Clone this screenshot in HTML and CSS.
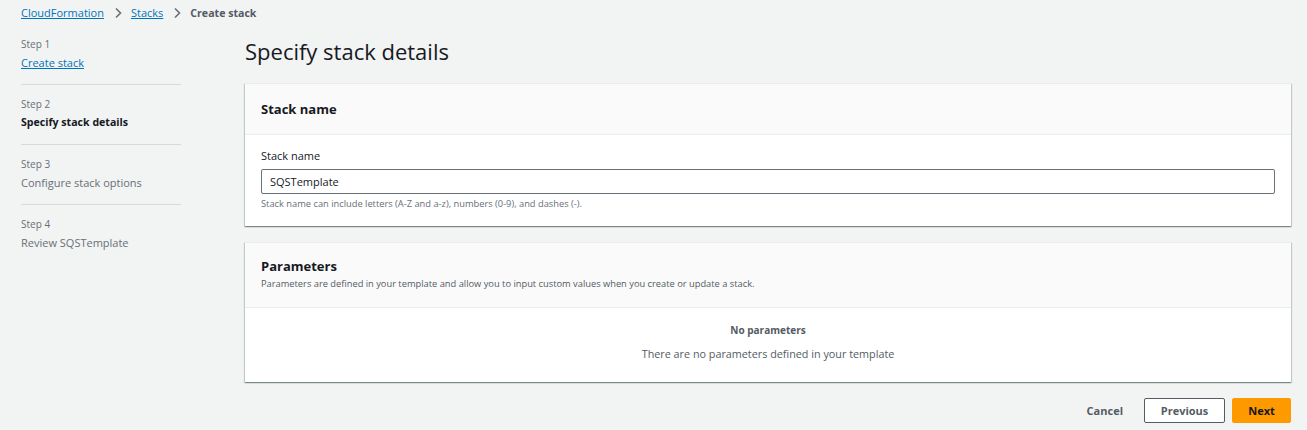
FILE: index.html
```html
<!DOCTYPE html>
<html lang="en">
<head>
<meta charset="utf-8">
<title>Create stack</title>
<link rel="stylesheet" href="styles.css">
</head>
<body>
<nav class="breadcrumbs">
  <a href="#" class="crumb-link">CloudFormation</a>
  <svg class="chev" width="10" height="12" viewBox="0 0 10 12"><path d="M3 1.5 L7.5 6 L3 10.5" fill="none" stroke="#687078" stroke-width="1.6"/></svg>
  <a href="#" class="crumb-link">Stacks</a>
  <svg class="chev" width="10" height="12" viewBox="0 0 10 12"><path d="M3 1.5 L7.5 6 L3 10.5" fill="none" stroke="#687078" stroke-width="1.6"/></svg>
  <span class="crumb-current">Create stack</span>
</nav>
<div class="layout">
  <aside class="steps">
    <div class="step first">
      <div class="step-num">Step 1</div>
      <a href="#" class="step-name link">Create stack</a>
    </div>
    <div class="step">
      <div class="step-num">Step 2</div>
      <div class="step-name active">Specify stack details</div>
    </div>
    <div class="step">
      <div class="step-num">Step 3</div>
      <div class="step-name disabled">Configure stack options</div>
    </div>
    <div class="step">
      <div class="step-num">Step 4</div>
      <div class="step-name disabled">Review SQSTemplate</div>
    </div>
  </aside>
  <main class="main">
    <h1 class="title">Specify stack details</h1>
    <section class="card">
      <header class="card-head single">
        <h2>Stack name</h2>
      </header>
      <div class="card-body">
        <label class="field-label">Stack name</label>
        <input class="text-input" type="text" value="SQSTemplate">
        <div class="hint">Stack name can include letters (A-Z and a-z), numbers (0-9), and dashes (-).</div>
      </div>
    </section>
    <section class="card">
      <header class="card-head">
        <h2>Parameters</h2>
        <p class="desc">Parameters are defined in your template and allow you to input custom values when you create or update a stack.</p>
      </header>
      <div class="card-body empty">
        <div class="empty-title">No parameters</div>
        <div class="empty-text">There are no parameters defined in your template</div>
      </div>
    </section>
    <div class="actions">
      <button class="btn btn-link">Cancel</button>
      <button class="btn btn-normal">Previous</button>
      <button class="btn btn-primary">Next</button>
    </div>
  </main>
</div>
</body>
</html>
```

FILE: styles.css
```css
html, body {
  margin: 0;
  padding: 0;
  background: #f2f3f3;
  font-family: "Open Sans", "Noto Sans", sans-serif;
  color: #16191f;
}
body {
  width: 1307px;
  height: 430px;
  overflow: hidden;
}
.breadcrumbs {
  display: flex;
  align-items: center;
  height: 26px;
  padding-left: 21px;
  font-size: 11px;
  padding-bottom: 1px;
  box-sizing: border-box;
}
.crumb-link {
  color: #0073bb;
  text-decoration: underline;
}
.chev {
  margin: 0 8px 0 9px;
}
.crumb-current {
  color: #545b64;
  font-weight: 700;
  font-size: 10.6px;
}
.layout {
  display: flex;
  padding-left: 21px;
  padding-right: 16px;
}
.steps {
  width: 160px;
  flex: none;
  margin-right: 64px;
  padding-top: 9px;
}
.step {
  border-top: 1px solid #d5dbdb;
  padding-top: 10px;
  height: 49px;
}
.step.first {
  border-top: none;
  padding-top: 0;
  height: 49px;
}
.step-num {
  font-size: 10px;
  color: #687078;
  line-height: 18px;
}
.step-name {
  display: block;
  font-size: 11px;
  line-height: 19px;
}
.step-name.link {
  color: #0073bb;
  text-decoration: underline;
}
.step-name.active {
  font-weight: 700;
  font-size: 10.6px;
  color: #16191f;
}
.step-name.disabled {
  color: #687078;
}
.main {
  flex: 1;
}
.title {
  margin: 0;
  font-size: 22px;
  font-weight: 400;
  line-height: 30px;
  height: 46px;
  box-sizing: border-box;
  padding-top: 10px;
  margin-bottom: 11px;
}
.card {
  background: #fff;
  border-top: 1px solid #eaeded;
  box-shadow: 0 1px 1px 0 rgba(0, 28, 36, 0.3), 1px 1px 1px 0 rgba(0, 28, 36, 0.15), -1px 1px 1px 0 rgba(0, 28, 36, 0.15);
  margin-bottom: 16px;
}
.card-head {
  background: #fafafa;
  border-bottom: 1px solid #eaeded;
  padding: 14px 16px 14px;
}
.card-head.single {
  height: 51px;
  box-sizing: border-box;
  display: flex;
  align-items: center;
  padding: 0 16px;
}
.card-head h2 {
  margin: 0;
  font-size: 13px;
  font-weight: 700;
  line-height: 18px;
}
.desc {
  margin: 0;
  font-size: 9.3px;
  color: #545b64;
  line-height: 18px;
}
.card-body {
  padding: 13px 16px 14px;
}
.field-label {
  display: block;
  font-size: 11px;
  line-height: 16px;
  margin-bottom: 5px;
}
.text-input {
  display: block;
  box-sizing: border-box;
  width: 100%;
  height: 25px;
  border: 1px solid #687078;
  border-radius: 2px;
  padding: 0 8px;
  font-family: inherit;
  font-size: 11px;
  color: #16191f;
  background: #fff;
  outline: none;
}
.hint {
  font-size: 9.3px;
  color: #687078;
  line-height: 16px;
  margin-top: 2px;
}
.card-body.empty {
  text-align: center;
  padding: 13px 16px 16px;
  height: 74px;
  box-sizing: border-box;
}
.empty-title {
  font-size: 10px;
  font-weight: 700;
  color: #545b64;
  line-height: 18px;
}
.empty-text {
  font-size: 10.8px;
  color: #545b64;
  line-height: 18px;
  margin-top: 6px;
}
.actions {
  display: flex;
  justify-content: flex-end;
  align-items: center;
  gap: 7px;
  margin-top: 0;
}
.btn {
  font-family: inherit;
  font-size: 11px;
  font-weight: 700;
  height: 25px;
  box-sizing: border-box;
  border-radius: 2px;
  cursor: pointer;
}
.btn-link {
  background: none;
  border: none;
  color: #545b64;
  padding: 0 14px;
}
.btn-normal {
  background: #fff;
  border: 1px solid #545b64;
  color: #545b64;
  width: 81px;
}
.btn-primary {
  background: #ff9900;
  border: 1px solid #ff9900;
  color: #16191f;
  width: 59px;
}
```
